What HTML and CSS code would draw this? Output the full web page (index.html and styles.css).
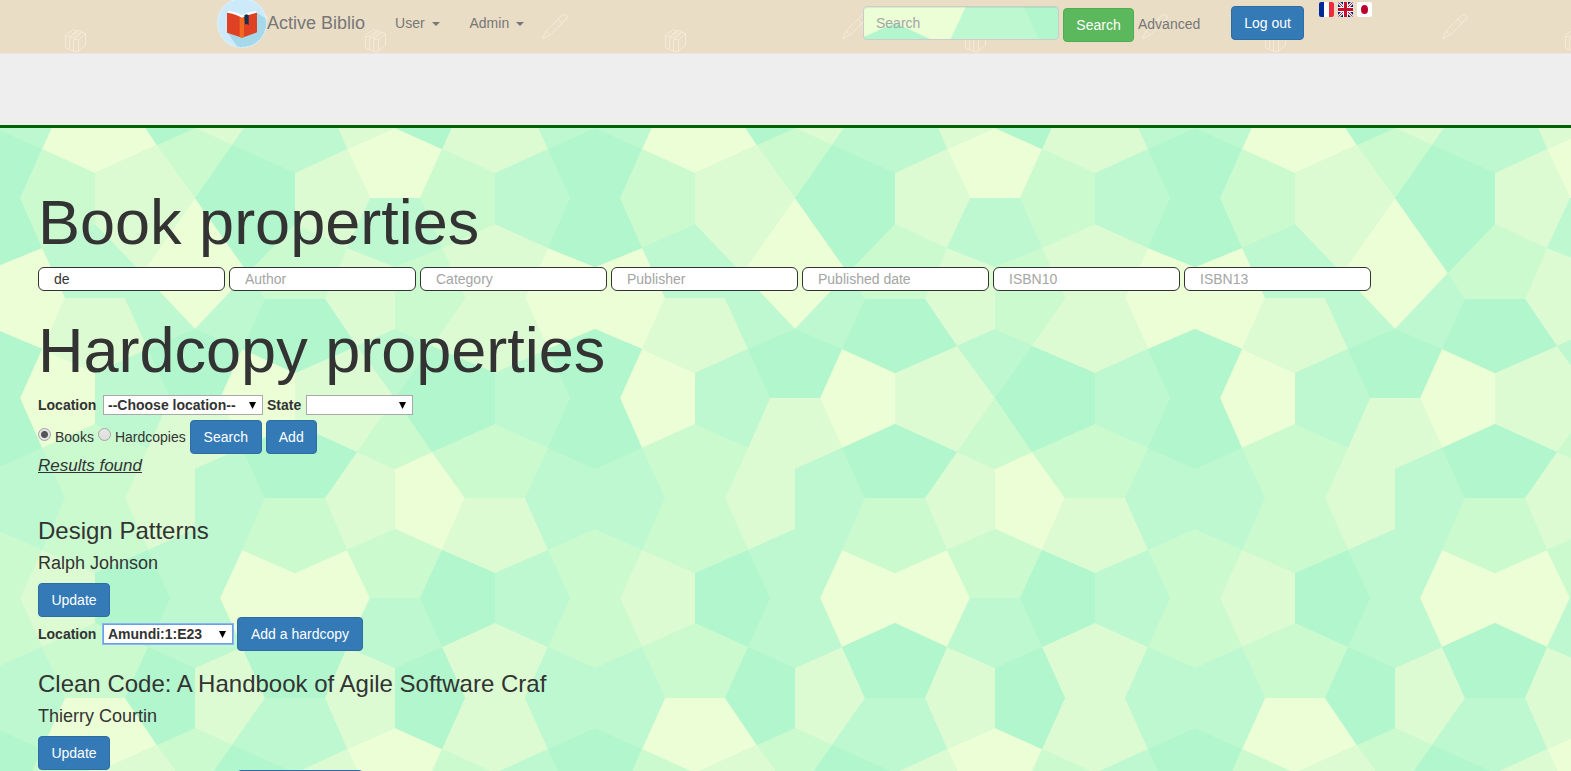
FILE: index.html
```html
<!DOCTYPE html>
<html lang="en">
<head>
<meta charset="utf-8">
<title>Active Biblio</title>
<link rel="stylesheet" href="styles.css">
</head>
<body>
<header class="navbar">
  <div class="navbar-inner">
    <a class="brand" href="#">
      <svg class="logo" viewBox="0 0 150 150" aria-hidden="true">
        <circle cx="75" cy="75" r="75" fill="#cdeafa"/>
        <path d="M75 119 120 44 147 62A73 73 0 0 1 76 148L62 148 32 104z" fill="#a5d8e9"/>
        <circle cx="75" cy="75" r="73" fill="none" stroke="#f4fbff" stroke-width="2" stroke-dasharray="5 3"/>
        <path d="M30 44 34 39Q60 42 75 52Q92 42 116 40L120 44 75 62z" fill="#fff"/>
        <path d="M30 44Q58 48 75 60Q92 50 120 44V103L75 119 30 104z" fill="#de4124"/>
        <path d="M68 56 75 60 81 57V117L75 119 68 117z" fill="#f26a21"/>
        <path d="M82 52 88 49 95 51V82L89 77 84 80z" fill="#12304f"/>
      </svg><span>Active Biblio</span>
    </a>
    <nav class="menu">
      <a href="#">User <span class="caret"></span></a>
      <a href="#">Admin <span class="caret"></span></a>
    </nav>
    <form class="quick-search">
      <input class="quick-input" type="text" placeholder="Search" aria-label="Search">
      <button class="btn btn-success" type="button">Search</button>
      <a href="#">Advanced</a>
    </form>
    <button class="btn logout" type="button">Log out</button>
    <div class="flags">
      <a href="#" aria-label="Français"><svg viewBox="0 0 15 15"><path fill="#fff" d="M0 0h15v15H0z"/><path fill="#00299a" d="M0 0h5v15H0z"/><path fill="#ee2d3c" d="M10 0h5v15h-5z"/></svg></a>
      <a href="#" aria-label="English"><svg viewBox="0 0 15 15"><path fill="#012169" d="M0 0h15v15H0z"/><path stroke="#fff" stroke-width="3" d="M0 0 15 15M15 0 0 15"/><path stroke="#c8102e" stroke-width="1" d="M0 0 15 15M15 0 0 15"/><path stroke="#fff" stroke-width="5" d="M7.500 0v15M0 7.500h15"/><path stroke="#c8102e" stroke-width="3" d="M7.500 0v15M0 7.500h15"/></svg></a>
      <a href="#" aria-label="日本語"><svg viewBox="0 0 15 15"><path fill="#fff" d="M0 0h15v15H0z"/><ellipse cx="7.500" cy="7.500" rx="3.500" ry="4.500" fill="#bc002d"/></svg></a>
    </div>
  </div>
</header>
<div class="banner"></div>
<main class="content">
  <form>
    <h1>Book properties</h1>
    <div class="fields">
      <input type="text" value="de" aria-label="Title">
      <input type="text" placeholder="Author" aria-label="Author">
      <input type="text" placeholder="Category" aria-label="Category">
      <input type="text" placeholder="Publisher" aria-label="Publisher">
      <input type="text" placeholder="Published date" aria-label="Published date">
      <input type="text" placeholder="ISBN10" aria-label="ISBN10">
      <input type="text" placeholder="ISBN13" aria-label="ISBN13">
    </div>
    <h1>Hardcopy properties</h1>
    <div class="row selects">
      <label for="location" class="location">Location</label>
      <select id="location" class="wide"><option>--Choose location--</option></select>
      <label for="state">State</label>
      <select id="state" class="narrow"><option></option></select>
    </div>
    <div class="row">
      <div class="choice"><input type="radio" name="kind" id="books" checked><label for="books">Books</label></div>
      <div class="choice"><input type="radio" name="kind" id="copies"><label for="copies">Hardcopies</label></div>
      <button class="btn medium" type="button">Search</button>
      <button class="btn" type="button">Add</button>
    </div>
  </form>
  <p class="found">Results found</p>
  <article>
    <h3>Design Patterns</h3>
    <h4>Ralph Johnson</h4>
    <div class="row"><button class="btn medium" type="button">Update</button></div>
    <div class="row">
      <label for="loc1" class="location">Location</label>
      <select id="loc1" class="active"><option>Amundi:1:E23</option></select>
      <button class="btn large" type="button">Add a hardcopy</button>
    </div>
  </article>
  <article>
    <h3>Clean Code: A Handbook of Agile Software Craf</h3>
    <h4>Thierry Courtin</h4>
    <div class="row"><button class="btn medium" type="button">Update</button></div>
    <div class="row">
      <label for="loc2" class="location">Location</label>
      <select id="loc2"><option>Amundi:1:E23</option></select>
      <button class="btn large" type="button">Add a hardcopy</button>
    </div>
  </article>
</main>
</body>
</html>
```
FILE: styles.css
```css
:root {
  --tiles: url("data:image/svg+xml,%3Csvg xmlns='http://www.w3.org/2000/svg' xmlns:xlink='http://www.w3.org/1999/xlink' width='600' height='600' viewBox='0 0 600 600'%3E%3Crect width='600' height='600' fill='%23cbfacf'/%3E%3Cdefs%3E%3Cg id='t'%3E%3Cpath fill='%23ebfed6' d='M65 698 125 698 157 745 95 773 42 749zM195 198 248 273 195 329 142 273zM395 728 347 749 370 798 420 798 442 749zM548 248 595 267 642 248 665 298 642 349 595 329 548 349 525 298zM42 349 95 373 95 424 42 448 20 398zM242 349 295 373 295 424 242 448 220 398zM395 469 432 452 465 498 442 550 395 529zM242 550 295 573 347 550 370 598 347 647 295 623 242 647 220 598z'/%3E%3Cpath fill='%23dcfbd3' d='M95 773 157 745 195 798 142 873 95 824zM195 668 242 647 265 698 232 745 195 728zM347 647 395 668 395 728 347 749 325 698zM442 647 495 623 548 647 525 698 548 749 495 773 442 749 465 698zM295 773 347 749 370 798 347 848 295 824zM65 298 125 298 148 349 95 373 42 349zM347 248 395 267 395 329 357 346 325 299zM442 248 495 224 548 248 525 298 548 349 495 373 432 346 465 298zM170 398 220 398 242 448 195 469 148 448zM295 373 357 346 395 398 357 452 295 424zM148 448 195 469 195 529 148 550 125 498zM357 452 395 469 395 529 347 550 325 498zM465 498 525 498 548 550 495 573 442 550zM42 550 95 573 95 623 42 647 20 598z'/%3E%3Cpath fill='%23cbfacf' d='M20 198 42 149 95 173 95 224 42 248zM195 728 157 745 195 798 232 745zM420 198 442 149 495 173 495 224 442 248zM295 224 347 248 325 299 265 299 248 273zM395 267 442 248 465 298 432 346 395 329zM395 398 432 452 395 469 357 452zM42 448 95 424 148 448 125 498 148 550 95 573 42 550 65 498zM265 498 325 498 347 550 295 573 242 550zM432 452 495 424 548 448 525 498 465 498zM347 550 395 529 442 550 420 598 370 598zM548 550 595 529 642 550 620 598 642 647 595 668 548 647 570 598zM42 647 95 623 148 647 125 698 65 698z'/%3E%3Cpath fill='%23bef8d0' d='M548 647 595 668 642 647 665 698 642 749 595 728 548 749 525 698zM265 698 325 698 347 749 295 773 232 745zM370 198 420 198 442 248 395 267 347 248zM495 173 548 149 570 198 548 248 495 224zM42 248 95 224 142 273 125 298 65 298zM142 273 195 329 148 349 125 298zM248 273 265 299 242 349 195 329zM95 373 148 349 170 398 148 448 95 424zM357 346 395 329 432 346 395 398zM495 373 548 349 570 398 548 448 495 424zM548 448 595 469 642 448 665 498 642 550 595 529 548 550 525 498zM195 469 242 448 265 498 242 550 220 598 242 647 195 668 148 647 170 598 148 550 195 529zM370 598 420 598 442 647 395 668 347 647zM495 573 548 550 570 598 548 647 495 623z'/%3E%3Cpath fill='%23b1f6cc' d='M595 128 642 149 620 198 642 248 595 267 548 248 570 198 548 149zM232 745 295 773 295 824 248 873 195 798zM148 647 195 668 195 728 157 745 125 698zM395 668 442 647 465 698 442 749 395 728zM548 349 595 329 642 349 620 398 642 448 595 469 548 448 570 398zM195 329 242 349 220 398 170 398 148 349zM265 299 325 299 357 346 295 373 242 349zM432 346 495 373 495 424 432 452 395 398zM242 448 295 424 357 452 325 498 265 498zM442 550 495 573 495 623 442 647 420 598zM95 573 148 550 170 598 148 647 95 623zM242 647 295 623 347 647 325 698 265 698z'/%3E%3C/g%3E%3C/defs%3E%3Cuse xlink:href='%23t'/%3E%3Cuse xlink:href='%23t' x='-600'/%3E%3Cuse xlink:href='%23t' y='-600'/%3E%3Cuse xlink:href='%23t' x='-600' y='-600'/%3E%3C/svg%3E");
  --doodles: url("data:image/svg+xml,%3Csvg xmlns='http://www.w3.org/2000/svg' width='300' height='53' viewBox='0 0 300 53'%3E%3Cg fill='none' stroke='%23f6ead5' stroke-width='1'%3E%3Cpath d='M65.500 35 73.500 29.500 76 31 79 30.500 81 32 85.500 33.500V45L78 51.500H74L69.500 49.500 65.500 48zM65.500 36.500H69L77 31M69.500 49V38L77.500 32M69.500 38H73L81 32M73.500 51V39.500H78.500V51M73.500 39.500 81 33.500M78.500 39.500 85.500 34'/%3E%3Cpath d='M242.500 38.500 246 31 262 15Q265 13.500 266.500 16L267.500 18 250 35zM246 31 250 35M258 19 262 24M260 25 267 18'/%3E%3C/g%3E%3C/svg%3E");
  --arrow: url("data:image/svg+xml,%3Csvg xmlns='http://www.w3.org/2000/svg' width='8' height='7'%3E%3Cpath d='M0 0h7L3.500 7z'/%3E%3C/svg%3E");
}

* { box-sizing: border-box; }
html { scrollbar-width: none; }

body {
  margin: 0;
  background: var(--tiles) fixed;
  color: #333;
  font: 14px/20px "Liberation Sans", Arial, sans-serif;
}

input, select, button { font: inherit; color: inherit; margin: 0; }

.navbar {
  height: 54px;
  background: #e9ddc6 var(--doodles) repeat-x;
  border-bottom: 1px solid #e7e7e7;
}
.navbar a { color: #777; text-decoration: none; }
.navbar-inner {
  display: flex;
  align-items: flex-start;
  max-width: 1173px;
  margin: 0 auto;
  padding-left: 18px;
}
.brand { display: flex; font-size: 18px; }
.brand span { padding-top: 13px; }
.logo { width: 50px; height: 50px; margin-top: -2px; }
.menu { display: flex; gap: 30px; padding: 13px 0 0 30px; }
.caret {
  display: inline-block;
  margin-left: 3px;
  vertical-align: middle;
  border: 4px solid transparent;
  border-top-color: currentColor;
  border-bottom: 0;
}
.quick-search { display: flex; gap: 4px; margin-left: auto; padding-top: 6px; }
.quick-input {
  width: 196px;
  height: 34px;
  padding: 6px 12px;
  border: 1px solid #ccc;
  border-radius: 4px;
  background: var(--tiles) fixed;
  box-shadow: inset 0 1px 1px rgba(0, 0, 0, .075);
}
.quick-search a { padding-top: 8px; }
.logout { min-width: 74px; margin: 6px 15px 0 31px; }
.flags { display: flex; gap: 4px; padding-top: 2px; }
.flags svg { display: block; width: 15px; height: 15px; border-radius: 2px; }

::placeholder { color: #a5a5a5; opacity: 1; }

.btn {
  height: 34px;
  min-width: 51px;
  padding: 6px 12px;
  border: 1px solid #2e6da4;
  border-radius: 4px;
  background: #337ab7;
  color: #fff;
}
.btn-success { min-width: 71px; margin: 2px 0 0; background: #5cb85c; border-color: #4cae4c; }
.medium { min-width: 72px; }
.large { min-width: 126px; }

.banner { height: 74px; background: #eee; border-bottom: 3px solid #006400; }

.content { padding: 60px 38px 20px; }
h1, h3, h4 { font-weight: normal; }
h1 { margin: 0 0 10px; font-size: 63px; line-height: 69px; }
h3 { margin: 20px 0 9px; font-size: 24px; line-height: 26px; }
h4 { margin: 9px 0 10px; font-size: 18px; line-height: 20px; }

.fields { display: flex; flex-wrap: wrap; gap: 4px; margin-bottom: 25px; }
.fields input {
  width: 187px;
  height: 24px;
  padding: 0 15px;
  border: 1px solid #333;
  border-radius: 6px;
  background: #fff;
}

.row { display: flex; align-items: center; gap: 4px; }
.row > label { min-width: 35px; font-weight: bold; }
.row > .location { min-width: 61px; }
.selects { margin-bottom: 5px; }

select {
  width: 130px;
  height: 20px;
  padding: 0 4px;
  border: 1px solid #a9a9a9;
  border-radius: 0;
  appearance: none;
  background: #fff var(--arrow) no-repeat right 5px center;
  font-weight: bold;
  line-height: 18px;
}
.wide { width: 160px; }
.narrow { width: 107px; }
.active { border-color: #6d9fe8; box-shadow: 0 0 0 1px #8db5ef; }

.choice { display: flex; align-items: center; gap: 4px; }
.choice input {
  appearance: none;
  width: 13px;
  height: 13px;
  margin-bottom: 6px;
  border: 1px solid #a5a5a5;
  border-radius: 50%;
  background: linear-gradient(#e8e8e8, #dcdcdc);
}
.choice input:checked { background: radial-gradient(#555 0 3px, #e4e4e4 4px); }

.found {
  margin: 0;
  padding-bottom: 21px;
  font-size: 17px;
  line-height: 23px;
  font-style: italic;
  text-decoration: underline;
}
```
